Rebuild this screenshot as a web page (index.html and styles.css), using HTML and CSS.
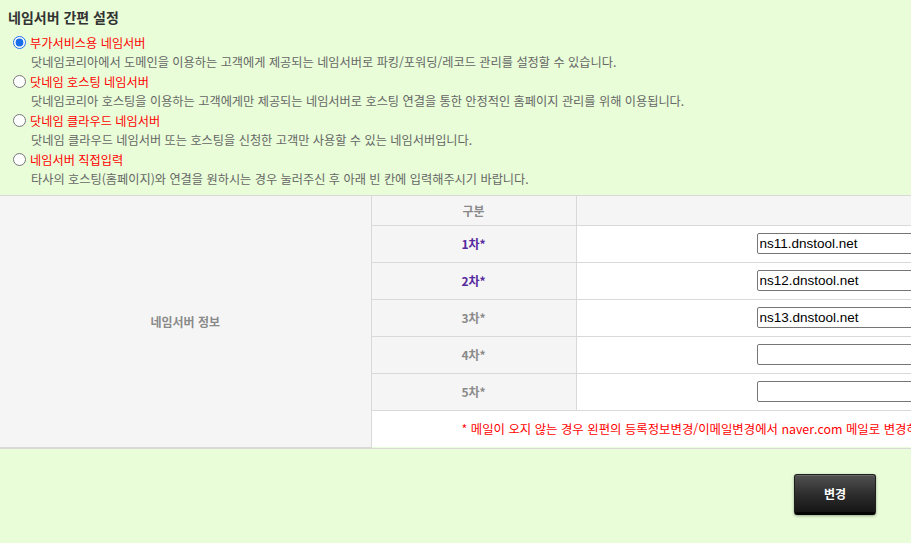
FILE: index.html
```html
<!DOCTYPE html>
<html lang="ko">
<head>
  <meta charset="UTF-8">
  <meta name="viewport" content="width=device-width, initial-scale=1.0">
  <title>네임서버 간편 설정</title>
  <link rel="stylesheet" href="styles.css">
</head>
<body>
<div class="ns-container">
  <div class="ns-options">
    <h2 class="ns-title">네임서버 간편 설정</h2>

    <div class="ns-option">
      <label class="ns-label"><input type="radio" name="ns_type" value="addon" checked> 부가서비스용 네임서버</label>
      <p class="ns-desc">닷네임코리아에서 도메인을 이용하는 고객에게 제공되는 네임서버로 파킹/포워딩/레코드 관리를 설정할 수 있습니다.</p>
    </div>
    <div class="ns-option">
      <label class="ns-label"><input type="radio" name="ns_type" value="hosting"> 닷네임 호스팅 네임서버</label>
      <p class="ns-desc">닷네임코리아 호스팅을 이용하는 고객에게만 제공되는 네임서버로 호스팅 연결을 통한 안정적인 홈페이지 관리를 위해 이용됩니다.</p>
    </div>
    <div class="ns-option">
      <label class="ns-label"><input type="radio" name="ns_type" value="cloud"> 닷네임 클라우드 네임서버</label>
      <p class="ns-desc">닷네임 클라우드 네임서버 또는 호스팅을 신청한 고객만 사용할 수 있는 네임서버입니다.</p>
    </div>
    <div class="ns-option">
      <label class="ns-label"><input type="radio" name="ns_type" value="manual"> 네임서버 직접입력</label>
      <p class="ns-desc">타사의 호스팅(홈페이지)와 연결을 원하시는 경우 눌러주신 후 아래 빈 칸에 입력해주시기 바랍니다.</p>
    </div>
  </div>

  <div class="ns-table-wrap">
    <table class="ns-table">
      <colgroup>
        <col class="col-title">
        <col class="col-name">
        <col class="col-value">
      </colgroup>
      <tr>
        <th class="cell-title" rowspan="7">네임서버 정보</th>
        <th class="cell-name">구분</th>
        <th class="cell-head"></th>
      </tr>
      <tr>
        <th class="cell-name active">1차*</th>
        <td class="cell-value"><input type="text" class="ns-input" value="ns11.dnstool.net"></td>
      </tr>
      <tr>
        <th class="cell-name active">2차*</th>
        <td class="cell-value"><input type="text" class="ns-input" value="ns12.dnstool.net"></td>
      </tr>
      <tr>
        <th class="cell-name">3차*</th>
        <td class="cell-value"><input type="text" class="ns-input" value="ns13.dnstool.net"></td>
      </tr>
      <tr>
        <th class="cell-name">4차*</th>
        <td class="cell-value"><input type="text" class="ns-input" value=""></td>
      </tr>
      <tr>
        <th class="cell-name">5차*</th>
        <td class="cell-value"><input type="text" class="ns-input" value=""></td>
      </tr>
      <tr>
        <td class="cell-notice" colspan="2">* 메일이 오지 않는 경우 왼편의 등록정보변경/이메일변경에서 naver.com 메일로 변경하여 주시기 바랍니다.</td>
      </tr>
    </table>
  </div>

  <div class="ns-actions">
    <button type="button" class="btn-submit">변경</button>
  </div>
</div>
</body>
</html>
```

FILE: styles.css
```css
:root {
  --bg-green: #e8fdd8;
  --cell-gray: #f5f5f5;
  --border-color: #d9d9d9;
  --text-dark: #333333;
  --text-gray: #666666;
  --label-gray: #8a8a8a;
  --label-purple: #55299e;
  --alert-red: #ff0000;
}

* {
  box-sizing: border-box;
  margin: 0;
  padding: 0;
}

body {
  font-family: "Noto Sans CJK KR", "Noto Sans", sans-serif;
  background: #ffffff;
  color: var(--text-dark);
  overflow: hidden;
}

.ns-container {
  background: var(--bg-green);
  border-bottom: 1px solid var(--border-color);
}

.ns-options {
  padding: 7px 8px 6px;
}

.ns-title {
  font-size: 14px;
  font-weight: 700;
  line-height: 20px;
  color: var(--text-dark);
  margin-bottom: 6px;
}

.ns-option {
  padding-left: 5px;
}

.ns-label {
  display: flex;
  align-items: center;
  gap: 4px;
  height: 19px;
  font-size: 12.2px;
  color: var(--alert-red);
}

.ns-label input {
  width: 13px;
  height: 13px;
  margin: 0;
  accent-color: #1a6dea;
}

.ns-desc {
  font-size: 12.2px;
  line-height: 20px;
  color: var(--text-gray);
  padding-left: 18px;
}

.ns-table-wrap {
  overflow: hidden;
  border-top: 1px solid var(--border-color);
  border-bottom: 1px solid var(--border-color);
}

.ns-table {
  width: 1200px;
  border-collapse: collapse;
  table-layout: fixed;
}

.col-title { width: 371px; }
.col-name { width: 205px; }
.col-value { width: 624px; }

.ns-table th,
.ns-table td {
  border: 1px solid var(--border-color);
  font-size: 12px;
}

.ns-table tr:first-child th { border-top: 0; }
.ns-table tr:last-child td,
.ns-table tr:last-child th { border-bottom: 0; }

.cell-title {
  border-left: 0 !important;
  background: var(--cell-gray);
  color: var(--label-gray);
  font-weight: 700;
}

.cell-name {
  background: var(--cell-gray);
  color: var(--label-gray);
  font-weight: 700;
  height: 37px;
}

.ns-table tr:first-child .cell-name,
.cell-head {
  height: 29px;
  background: var(--cell-gray);
}

.cell-name.active {
  color: var(--label-purple);
}

.cell-value {
  background: #ffffff;
  padding-left: 180px;
}

.ns-input {
  display: block;
  width: 260px;
  height: 21px;
  border: 1px solid #767676;
  border-radius: 2px;
  padding: 0 2px;
  font-family: "Liberation Sans", Arial, sans-serif;
  font-size: 13.5px;
  color: #000000;
  background: #ffffff;
}

.ns-table .cell-notice {
  background: #ffffff;
  height: 37px;
  padding-left: 90px;
  font-size: 12.4px;
  color: var(--alert-red);
  white-space: nowrap;
}

.ns-actions {
  width: 911px;
  height: 94px;
  padding: 25px 35px 0 0;
  display: flex;
  justify-content: flex-end;
  align-items: flex-start;
}

.btn-submit {
  width: 82px;
  height: 41px;
  border: 1px solid #1e1e1e;
  border-bottom: 3px solid #050505;
  border-radius: 3px;
  background: linear-gradient(to bottom, #515151 0%, #2b2b2b 55%, #161616 100%);
  box-shadow: 0 1px 3px rgba(0, 0, 0, 0.35), inset 0 1px 0 rgba(255, 255, 255, 0.15);
  color: #ffffff;
  font-family: "Noto Sans CJK KR", sans-serif;
  font-size: 12px;
  font-weight: 700;
  cursor: pointer;
}
```
